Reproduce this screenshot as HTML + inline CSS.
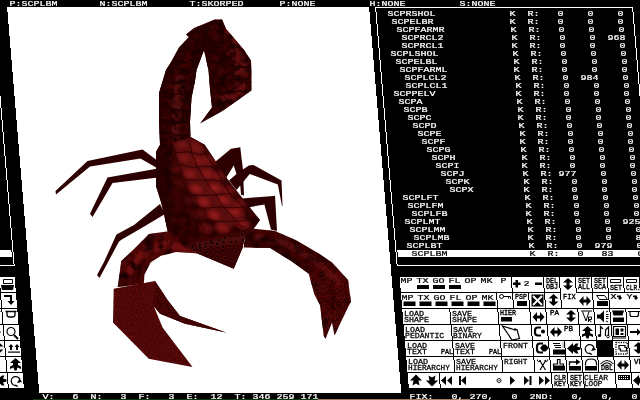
<!DOCTYPE html>
<html><head><meta charset="utf-8"><title>SKORPED</title>
<style>
html,body{margin:0;padding:0;background:#000;overflow:hidden}
#s{position:relative;width:640px;height:400px;overflow:hidden;background:#000}
svg{position:absolute;left:0;top:0}
.t{position:absolute;font:10px/10px "Liberation Mono",monospace;color:#fff;white-space:pre;transform:scale(1,.8);transform-origin:0 0;-webkit-text-stroke-width:.3px}
</style></head><body><div id="s">
<svg width="640" height="400" viewBox="0 0 640 400" shape-rendering="crispEdges">
<rect x="7" y="7" width="362" height="5" fill="#fff"/><rect x="8" y="12" width="362" height="12" fill="#fff"/><rect x="9" y="24" width="362" height="12" fill="#fff"/><rect x="10" y="36" width="362" height="12" fill="#fff"/><rect x="11" y="48" width="362" height="12" fill="#fff"/><rect x="12" y="60" width="362" height="12" fill="#fff"/><rect x="13" y="72" width="362" height="12" fill="#fff"/><rect x="14" y="84" width="362" height="12" fill="#fff"/><rect x="15" y="96" width="362" height="12" fill="#fff"/><rect x="16" y="108" width="362" height="12" fill="#fff"/><rect x="17" y="120" width="362" height="12" fill="#fff"/><rect x="18" y="132" width="362" height="12" fill="#fff"/><rect x="19" y="144" width="362" height="12" fill="#fff"/><rect x="20" y="156" width="362" height="12" fill="#fff"/><rect x="21" y="168" width="362" height="12" fill="#fff"/><rect x="22" y="180" width="362" height="12" fill="#fff"/><rect x="23" y="192" width="362" height="12" fill="#fff"/><rect x="24" y="204" width="362" height="12" fill="#fff"/><rect x="25" y="216" width="362" height="12" fill="#fff"/><rect x="26" y="228" width="362" height="12" fill="#fff"/><rect x="27" y="240" width="362" height="12" fill="#fff"/><rect x="28" y="252" width="362" height="12" fill="#fff"/><rect x="29" y="264" width="362" height="12" fill="#fff"/><rect x="30" y="276" width="362" height="12" fill="#fff"/><rect x="31" y="288" width="362" height="12" fill="#fff"/><rect x="32" y="300" width="362" height="12" fill="#fff"/><rect x="33" y="312" width="362" height="12" fill="#fff"/><rect x="34" y="324" width="362" height="12" fill="#fff"/><rect x="35" y="336" width="362" height="12" fill="#fff"/><rect x="36" y="348" width="362" height="12" fill="#fff"/><rect x="37" y="360" width="362" height="12" fill="#fff"/><rect x="38" y="372" width="362" height="12" fill="#fff"/><rect x="39" y="384" width="362" height="9" fill="#fff"/><rect x="375" y="7" width="1" height="5" fill="#fff"/><rect x="376" y="12" width="1" height="12" fill="#fff"/><rect x="377" y="24" width="1" height="12" fill="#fff"/><rect x="378" y="36" width="1" height="12" fill="#fff"/><rect x="379" y="48" width="1" height="12" fill="#fff"/><rect x="380" y="60" width="1" height="12" fill="#fff"/><rect x="381" y="72" width="1" height="12" fill="#fff"/><rect x="382" y="84" width="1" height="12" fill="#fff"/><rect x="383" y="96" width="1" height="12" fill="#fff"/><rect x="384" y="108" width="1" height="12" fill="#fff"/><rect x="385" y="120" width="1" height="12" fill="#fff"/><rect x="386" y="132" width="1" height="12" fill="#fff"/><rect x="387" y="144" width="1" height="12" fill="#fff"/><rect x="388" y="156" width="1" height="12" fill="#fff"/><rect x="389" y="168" width="1" height="12" fill="#fff"/><rect x="390" y="180" width="1" height="12" fill="#fff"/><rect x="391" y="192" width="1" height="12" fill="#fff"/><rect x="392" y="204" width="1" height="12" fill="#fff"/><rect x="393" y="216" width="1" height="12" fill="#fff"/><rect x="394" y="228" width="1" height="12" fill="#fff"/><rect x="395" y="240" width="1" height="12" fill="#fff"/><rect x="396" y="252" width="1" height="12" fill="#fff"/><rect x="397" y="264" width="1" height="2" fill="#fff"/><rect x="632" y="7" width="1" height="5" fill="#fff"/><rect x="633" y="12" width="1" height="12" fill="#fff"/><rect x="634" y="24" width="1" height="12" fill="#fff"/><rect x="635" y="36" width="1" height="12" fill="#fff"/><rect x="636" y="48" width="1" height="12" fill="#fff"/><rect x="637" y="60" width="1" height="12" fill="#fff"/><rect x="638" y="72" width="1" height="12" fill="#fff"/><rect x="639" y="84" width="1" height="12" fill="#fff"/><rect x="0" y="96" width="1" height="12" fill="#fff"/><rect x="1" y="108" width="1" height="12" fill="#fff"/><rect x="2" y="120" width="1" height="12" fill="#fff"/><rect x="3" y="132" width="1" height="12" fill="#fff"/><rect x="4" y="144" width="1" height="12" fill="#fff"/><rect x="5" y="156" width="1" height="12" fill="#fff"/><rect x="6" y="168" width="1" height="12" fill="#fff"/><rect x="7" y="180" width="1" height="12" fill="#fff"/><rect x="8" y="192" width="1" height="12" fill="#fff"/><rect x="9" y="204" width="1" height="12" fill="#fff"/><rect x="10" y="216" width="1" height="12" fill="#fff"/><rect x="11" y="228" width="1" height="12" fill="#fff"/><rect x="12" y="240" width="1" height="12" fill="#fff"/><rect x="13" y="252" width="1" height="12" fill="#fff"/><rect x="14" y="264" width="1" height="2" fill="#fff"/><rect x="375" y="7" width="258" height="1" fill="#fff"/><rect x="397" y="265" width="258" height="1" fill="#fff"/><rect x="-243" y="265" width="258" height="1" fill="#fff"/><rect x="397" y="250" width="254" height="2" fill="#fff"/><rect x="-243" y="250" width="254" height="2" fill="#fff"/><rect x="398" y="252" width="254" height="5" fill="#fff"/><rect x="-242" y="252" width="254" height="5" fill="#fff"/><rect x="400" y="277" width="111" height="11" fill="#fff"/><rect x="401" y="288" width="111" height="4" fill="#fff"/><rect x="512" y="277" width="31" height="11" fill="#fff"/><rect x="513" y="288" width="31" height="4" fill="#fff"/><rect x="544" y="277" width="15" height="11" fill="#fff"/><rect x="545" y="288" width="15" height="4" fill="#fff"/><rect x="560" y="277" width="15" height="11" fill="#fff"/><rect x="561" y="288" width="15" height="4" fill="#fff"/><rect x="561" y="292" width="15" height="1" fill="#fff"/><rect x="576" y="277" width="15" height="11" fill="#fff"/><rect x="577" y="288" width="15" height="4" fill="#fff"/><rect x="592" y="277" width="15" height="11" fill="#fff"/><rect x="593" y="288" width="15" height="4" fill="#fff"/><rect x="608" y="277" width="15" height="11" fill="#fff"/><rect x="609" y="288" width="15" height="4" fill="#fff"/><rect x="624" y="277" width="15" height="11" fill="#fff"/><rect x="625" y="288" width="15" height="4" fill="#fff"/><rect x="0" y="277" width="15" height="11" fill="#fff"/><rect x="1" y="288" width="15" height="4" fill="#fff"/><rect x="401" y="293" width="95" height="7" fill="#fff"/><rect x="402" y="300" width="95" height="8" fill="#fff"/><rect x="497" y="293" width="15" height="7" fill="#fff"/><rect x="498" y="300" width="15" height="8" fill="#fff"/><rect x="513" y="293" width="15" height="7" fill="#fff"/><rect x="514" y="300" width="15" height="8" fill="#fff"/><rect x="529" y="293" width="15" height="7" fill="#fff"/><rect x="530" y="300" width="15" height="8" fill="#fff"/><rect x="545" y="293" width="15" height="7" fill="#fff"/><rect x="546" y="300" width="15" height="8" fill="#fff"/><rect x="561" y="293" width="31" height="7" fill="#fff"/><rect x="562" y="300" width="31" height="8" fill="#fff"/><rect x="593" y="293" width="15" height="7" fill="#fff"/><rect x="594" y="300" width="15" height="8" fill="#fff"/><rect x="609" y="293" width="31" height="7" fill="#fff"/><rect x="610" y="300" width="31" height="8" fill="#fff"/><rect x="-30" y="300" width="31" height="8" fill="#fff"/><rect x="1" y="293" width="15" height="7" fill="#fff"/><rect x="2" y="300" width="15" height="8" fill="#fff"/><rect x="402" y="309" width="47" height="3" fill="#fff"/><rect x="403" y="312" width="47" height="12" fill="#fff"/><rect x="450" y="309" width="47" height="3" fill="#fff"/><rect x="451" y="312" width="47" height="12" fill="#fff"/><rect x="498" y="309" width="31" height="3" fill="#fff"/><rect x="499" y="312" width="31" height="12" fill="#fff"/><rect x="530" y="309" width="15" height="3" fill="#fff"/><rect x="531" y="312" width="15" height="12" fill="#fff"/><rect x="546" y="309" width="31" height="3" fill="#fff"/><rect x="547" y="312" width="31" height="12" fill="#fff"/><rect x="578" y="309" width="15" height="3" fill="#fff"/><rect x="579" y="312" width="15" height="12" fill="#fff"/><rect x="594" y="309" width="15" height="3" fill="#fff"/><rect x="595" y="312" width="15" height="12" fill="#fff"/><rect x="610" y="309" width="15" height="3" fill="#fff"/><rect x="611" y="312" width="15" height="12" fill="#fff"/><rect x="626" y="309" width="15" height="3" fill="#fff"/><rect x="-14" y="309" width="15" height="3" fill="#fff"/><rect x="627" y="312" width="15" height="12" fill="#fff"/><rect x="-13" y="312" width="15" height="12" fill="#fff"/><rect x="2" y="309" width="15" height="3" fill="#fff"/><rect x="3" y="312" width="15" height="12" fill="#fff"/><rect x="404" y="325" width="47" height="11" fill="#fff"/><rect x="405" y="336" width="47" height="4" fill="#fff"/><rect x="452" y="325" width="47" height="11" fill="#fff"/><rect x="453" y="336" width="47" height="4" fill="#fff"/><rect x="500" y="325" width="31" height="11" fill="#fff"/><rect x="501" y="336" width="31" height="4" fill="#fff"/><rect x="532" y="325" width="15" height="11" fill="#fff"/><rect x="533" y="336" width="15" height="4" fill="#fff"/><rect x="548" y="325" width="31" height="11" fill="#fff"/><rect x="549" y="336" width="31" height="4" fill="#fff"/><rect x="580" y="325" width="15" height="11" fill="#fff"/><rect x="581" y="336" width="15" height="4" fill="#fff"/><rect x="596" y="325" width="15" height="11" fill="#fff"/><rect x="597" y="336" width="15" height="4" fill="#fff"/><rect x="612" y="325" width="15" height="11" fill="#fff"/><rect x="613" y="336" width="15" height="4" fill="#fff"/><rect x="628" y="325" width="15" height="11" fill="#fff"/><rect x="-12" y="325" width="15" height="11" fill="#fff"/><rect x="629" y="336" width="15" height="4" fill="#fff"/><rect x="-11" y="336" width="15" height="4" fill="#fff"/><rect x="4" y="325" width="15" height="11" fill="#fff"/><rect x="5" y="336" width="15" height="4" fill="#fff"/><rect x="405" y="341" width="47" height="7" fill="#fff"/><rect x="406" y="348" width="47" height="8" fill="#fff"/><rect x="453" y="341" width="47" height="7" fill="#fff"/><rect x="454" y="348" width="47" height="8" fill="#fff"/><rect x="501" y="341" width="31" height="7" fill="#fff"/><rect x="502" y="348" width="31" height="8" fill="#fff"/><rect x="533" y="341" width="15" height="7" fill="#fff"/><rect x="534" y="348" width="15" height="8" fill="#fff"/><rect x="549" y="341" width="15" height="7" fill="#fff"/><rect x="550" y="348" width="15" height="8" fill="#fff"/><rect x="565" y="341" width="15" height="7" fill="#fff"/><rect x="566" y="348" width="15" height="8" fill="#fff"/><rect x="581" y="341" width="15" height="7" fill="#fff"/><rect x="582" y="348" width="15" height="8" fill="#fff"/><rect x="597" y="340" width="17" height="17" fill="#000"/><rect x="613" y="341" width="15" height="7" fill="#fff"/><rect x="614" y="348" width="15" height="8" fill="#fff"/><rect x="629" y="341" width="15" height="7" fill="#fff"/><rect x="-11" y="341" width="15" height="7" fill="#fff"/><rect x="630" y="348" width="15" height="8" fill="#fff"/><rect x="-10" y="348" width="15" height="8" fill="#fff"/><rect x="5" y="341" width="15" height="7" fill="#fff"/><rect x="6" y="348" width="15" height="8" fill="#fff"/><rect x="406" y="357" width="47" height="3" fill="#fff"/><rect x="407" y="360" width="47" height="12" fill="#fff"/><rect x="454" y="357" width="47" height="3" fill="#fff"/><rect x="455" y="360" width="47" height="12" fill="#fff"/><rect x="502" y="357" width="31" height="3" fill="#fff"/><rect x="503" y="360" width="31" height="12" fill="#fff"/><rect x="534" y="357" width="15" height="3" fill="#fff"/><rect x="535" y="360" width="15" height="12" fill="#fff"/><rect x="550" y="357" width="15" height="3" fill="#fff"/><rect x="551" y="360" width="15" height="12" fill="#fff"/><rect x="566" y="357" width="15" height="3" fill="#fff"/><rect x="567" y="360" width="15" height="12" fill="#fff"/><rect x="582" y="357" width="15" height="3" fill="#fff"/><rect x="583" y="360" width="15" height="12" fill="#fff"/><rect x="598" y="357" width="15" height="3" fill="#fff"/><rect x="599" y="360" width="15" height="12" fill="#fff"/><rect x="614" y="357" width="15" height="3" fill="#fff"/><rect x="615" y="360" width="15" height="12" fill="#fff"/><rect x="630" y="357" width="15" height="3" fill="#fff"/><rect x="-10" y="357" width="15" height="3" fill="#fff"/><rect x="631" y="360" width="15" height="12" fill="#fff"/><rect x="-9" y="360" width="15" height="12" fill="#fff"/><rect x="6" y="357" width="15" height="3" fill="#fff"/><rect x="7" y="360" width="15" height="12" fill="#fff"/><rect x="408" y="373" width="31" height="11" fill="#fff"/><rect x="409" y="384" width="31" height="4" fill="#fff"/><rect x="440" y="373" width="111" height="11" fill="#fff"/><rect x="441" y="384" width="111" height="4" fill="#fff"/><rect x="552" y="373" width="15" height="11" fill="#fff"/><rect x="553" y="384" width="15" height="4" fill="#fff"/><rect x="568" y="373" width="15" height="11" fill="#fff"/><rect x="569" y="384" width="15" height="4" fill="#fff"/><rect x="584" y="373" width="31" height="11" fill="#fff"/><rect x="585" y="384" width="31" height="4" fill="#fff"/><rect x="616" y="373" width="15" height="11" fill="#fff"/><rect x="617" y="384" width="15" height="4" fill="#fff"/><rect x="632" y="373" width="15" height="11" fill="#fff"/><rect x="-8" y="373" width="15" height="11" fill="#fff"/><rect x="633" y="384" width="15" height="4" fill="#fff"/><rect x="-7" y="384" width="15" height="4" fill="#fff"/><rect x="8" y="373" width="15" height="11" fill="#fff"/><rect x="9" y="384" width="15" height="4" fill="#fff"/>
</svg>
<svg width="640" height="400" viewBox="0 0 640 400">
<defs><filter id="bl" x="-20%" y="-20%" width="140%" height="140%"><feGaussianBlur stdDeviation="2.2"/></filter><filter id="bl1" x="-20%" y="-20%" width="140%" height="140%"><feGaussianBlur stdDeviation="1.2"/></filter><filter id="sp" color-interpolation-filters="sRGB" x="0" y="0" width="100%" height="100%"><feTurbulence type="fractalNoise" baseFrequency="0.85" numOctaves="1" seed="7" result="n"/><feColorMatrix in="n" type="matrix" values="0 0 0 0 0.50  0 0 0 0 0.06  0 0 0 0 0.06  3 0 0 0 -1.45"/><feComposite in2="SourceGraphic" operator="in"/></filter><filter id="mo" color-interpolation-filters="sRGB" x="0" y="0" width="100%" height="100%"><feTurbulence type="fractalNoise" baseFrequency="0.11" numOctaves="3" seed="11" result="n"/><feColorMatrix in="n" type="matrix" values="0 0 0 0 0.12  0 0 0 0 0  0 0 0 0 0  0 3.2 0 0 -1.35"/><feComposite in2="SourceGraphic" operator="in"/></filter><filter id="mo2" color-interpolation-filters="sRGB" x="0" y="0" width="100%" height="100%"><feTurbulence type="fractalNoise" baseFrequency="0.2" numOctaves="2" seed="4" result="n"/><feColorMatrix in="n" type="matrix" values="0 0 0 0 0.10  0 0 0 0 0  0 0 0 0 0  0 0 2.6 0 -1.1"/><feComposite in2="SourceGraphic" operator="in"/></filter><clipPath id="cb"><polygon points="156,186 161,202 164,214 167.5,231 188,249.5 233.75,268.75 242.5,248 245,236 253.75,228.75 260,220 240,195 227.5,179 217.5,164 205,145 190.5,137 160,145 156,152"/></clipPath><clipPath id="ct"><polygon points="156,186 156,152 160,145 159,119 159,93 166,70 172,60.5 179,47.5 189,37 186,34.5 194,28 215,19.5 222,19.5 226,29 233,37 244,50 251,60.5 251.5,72 251.5,90.5 222.5,111 200,123.5 212,107.5 210,89 208.5,70 207.5,66 204,50 196.5,70 195,81 191.5,98 190,122 190.5,137 205,145 180,160"/></clipPath><clipPath id="ca"><polygon points="170,231 149,234 134,249 121.25,261 118.25,283.5 117.5,287 143.75,284 144.5,274.5 150.5,262.5 161,255.75 176,252 200,253.5 190,249"/><polygon points="253.75,228.75 275,231 295.6,240 318,253 332,262.5 348,280 351,302 350,303 334.5,335.5 332,322.5 325.5,338.75 323.75,336 320,305 314.4,294.4 308.75,273.75 292,261.5 270,248 243.75,247.5 245,236"/></clipPath><radialGradient id="sc"><stop offset="0" stop-color="#951c1c"/><stop offset=".55" stop-color="#7a1313" stop-opacity=".85"/><stop offset="1" stop-color="#560909" stop-opacity="0"/></radialGradient></defs><polygon points="55.5,191 87.5,161 142.5,149.5 158,161 157,168 140.5,158.5 90,166.5 56,194.5" fill="#2c0000" /><polygon points="90,213.75 107.5,177.5 158,168.5 158,177.5 112.5,183 92.5,217" fill="#2c0000" /><polygon points="160,204 165,214 145,226 121,240 119,241.5 99.5,278 97,275 104,262 116.5,234.5 134,225" fill="#2c0000" /><polygon points="215,162 231,148.75 240.3,147.25 241,154 233.75,165.6 226,178" fill="#2c0000" /><polygon points="233.75,165.6 238,150 241,154 243,169.4 244,195.6 241,194.7 240.3,186 236.5,174" fill="#2c0000" /><polygon points="229,180.5 236.5,174 248.75,165.6 253.4,165 281.5,180.6 282.5,206 282,206 277.8,184.4 249.7,174 236.5,190" fill="#2c0000" /><polygon points="242,198.4 273.75,196 275,195.6 277,231 271,229.5 264.4,204.4 248,207.5" fill="#2c0000" /><polygon points="156,186 156,152 160,145 159,119 159,93 166,70 172,60.5 179,47.5 189,37 186,34.5 194,28 215,19.5 222,19.5 226,29 233,37 244,50 251,60.5 251.5,72 251.5,90.5 222.5,111 200,123.5 212,107.5 210,89 208.5,70 207.5,66 204,50 196.5,70 195,81 191.5,98 190,122 190.5,137 205,145 180,160" fill="#3b0303" /><polygon points="156,186 161,202 164,214 167.5,231 188,249.5 233.75,268.75 242.5,248 245,236 253.75,228.75 260,220 240,195 227.5,179 217.5,164 205,145 190.5,137 160,145 156,152" fill="#360202" /><polygon points="170,231 149,234 134,249 121.25,261 118.25,283.5 117.5,287 143.75,284 144.5,274.5 150.5,262.5 161,255.75 176,252 200,253.5 190,249" fill="#4a0606" /><polygon points="253.75,228.75 275,231 295.6,240 318,253 332,262.5 348,280 351,302 350,303 334.5,335.5 332,322.5 325.5,338.75 323.75,336 320,305 314.4,294.4 308.75,273.75 292,261.5 270,248 243.75,247.5 245,236" fill="#3c0303" /><polygon points="113.75,288.75 155,281 161,290 167.5,300 180,316 226,332.5 185,323.75 160,313.75 153.75,306 162.5,327.5 192.5,367 148.75,358.75 113,322.5" fill="#480606" /><g clip-path="url(#ct)"><path d="M174,146L175,110L182,76" stroke="#520909" stroke-width="12" fill="none" filter="url(#bl)"/><path d="M186,66L203,42" stroke="#480606" stroke-width="8" fill="none" filter="url(#bl)"/><path d="M232,50L241,64L240,88L224,104" stroke="#5e0d0d" stroke-width="13" fill="none" filter="url(#bl)"/><path d="M244,58L247,72L246,88" stroke="#701313" stroke-width="5" fill="none" filter="url(#bl)"/><path d="M222,20L228,32L246,52" stroke="#6a1111" stroke-width="5" fill="none" filter="url(#bl1)"/><polygon points="156,186 156,152 160,145 159,119 159,93 166,70 172,60.5 179,47.5 189,37 186,34.5 194,28 215,19.5 222,19.5 226,29 233,37 244,50 251,60.5 251.5,72 251.5,90.5 222.5,111 200,123.5 212,107.5 210,89 208.5,70 207.5,66 204,50 196.5,70 195,81 191.5,98 190,122 190.5,137 205,145 180,160" fill="#fff" filter="url(#mo)"/><polygon points="156,186 156,152 160,145 159,119 159,93 166,70 172,60.5 179,47.5 189,37 186,34.5 194,28 215,19.5 222,19.5 226,29 233,37 244,50 251,60.5 251.5,72 251.5,90.5 222.5,111 200,123.5 212,107.5 210,89 208.5,70 207.5,66 204,50 196.5,70 195,81 191.5,98 190,122 190.5,137 205,145 180,160" fill="#fff" filter="url(#mo2)"/><path d="M158,150L160,95L170,62L190,36L216,20" stroke="#260000" stroke-width="5" fill="none" filter="url(#bl1)"/><path d="M190,135L191,98L196,70L204,50L200,40" stroke="#260000" stroke-width="4" fill="none" filter="url(#bl1)"/><path d="M196,26L222,48L212,52z" fill="#240000" filter="url(#bl1)"/><path d="M208,52L212,108L206,118" stroke="#2a0000" stroke-width="4" fill="none" filter="url(#bl1)"/><path d="M158.6,133.1L165.0,133.9L171.6,132.8L176.8,135.9L183.4,134.5L190.8,135.9" stroke="#1c0000" stroke-width="1.2" fill="none"/><path d="M160.5,119.9L166.2,119.7L172.2,122.8L178.0,123.2L184.3,121.8L190.4,124.3" stroke="#1c0000" stroke-width="1.2" fill="none"/><path d="M158.7,104.5L166.0,106.7L172.2,108.8L178.5,109.7L184.4,110.2L190.9,111.4" stroke="#1c0000" stroke-width="1.2" fill="none"/><path d="M160.6,91.7L165.8,92.7L173.5,94.0L179.4,94.2L185.6,95.0L191.8,96.3" stroke="#1c0000" stroke-width="1.2" fill="none"/><path d="M164.1,81.3L170.5,82.0L177.0,82.8L182.9,80.7L189.4,83.9L195.6,83.2" stroke="#1c0000" stroke-width="1.2" fill="none"/><path d="M168.3,67.1L174.3,69.0L179.3,68.2L186.0,72.0L190.5,72.2L196.9,70.9" stroke="#1c0000" stroke-width="1.2" fill="none"/><path d="M173.7,57.9L179.8,56.5L184.6,57.5L189.9,59.5L195.4,62.5L200.0,63.6" stroke="#1c0000" stroke-width="1.2" fill="none"/><path d="M180.7,45.6L185.6,46.9L189.3,49.5L194.4,50.1L197.9,53.8L202.7,55.5" stroke="#1c0000" stroke-width="1.2" fill="none"/><path d="M190.6,37.6L193.1,39.7L196.6,41.5L199.7,43.2L203.5,44.4L205.9,46.7" stroke="#1c0000" stroke-width="1.2" fill="none"/><path d="M209.6,61.4L219.0,63.3L226.5,62.8L234.5,65.9L242.0,67.2L251.2,66.6" stroke="#1c0000" stroke-width="1.2" fill="none"/><path d="M211.2,77.9L219.5,78.3L227.7,80.4L234.8,79.0L244.1,82.7L251.6,81.9" stroke="#1c0000" stroke-width="1.2" fill="none"/><path d="M212.1,93.4L218.6,93.0L225.4,93.5L232.1,92.4L239.6,90.9L246.1,92.8" stroke="#1c0000" stroke-width="1.2" fill="none"/><path d="M224.7,39.1L229.5,41.6L232.5,44.6L237.3,45.9L240.7,49.1L245.5,51.8" stroke="#1c0000" stroke-width="1.2" fill="none"/><path d="M214.6,28.9L217.3,32.1L221.8,33.0L224.4,33.6L228.4,35.4L232.5,39.1" stroke="#1c0000" stroke-width="1.2" fill="none"/><path d="M213.5,105.3L218.1,105.3L221.7,103.1L224.2,101.7L228.9,100.5L231.8,99.7" stroke="#1c0000" stroke-width="1.2" fill="none"/></g><g clip-path="url(#cb)"><polygon points="156,186 161,202 164,214 167.5,231 188,249.5 233.75,268.75 242.5,248 245,236 253.75,228.75 260,220 240,195 227.5,179 217.5,164 205,145 190.5,137 160,145 156,152" fill="#fff" filter="url(#mo)"/><path d="M156,150L158,190L168,232" stroke="#280000" stroke-width="12" fill="none" filter="url(#bl)"/><path d="M184,140L198,172L216,200L236,224" stroke="#5a0b0b" stroke-width="28" fill="none" filter="url(#bl)"/><ellipse cx="181" cy="144" rx="10.5" ry="7.5" fill="url(#sc)" opacity="0.5" transform="rotate(20 181 144)"/><ellipse cx="196" cy="147.5" rx="10.5" ry="7.5" fill="url(#sc)" opacity="0.55" transform="rotate(20 196 147.5)"/><ellipse cx="184" cy="158" rx="10.5" ry="7.5" fill="url(#sc)" opacity="0.6" transform="rotate(20 184 158)"/><ellipse cx="199" cy="161" rx="10.5" ry="7.5" fill="url(#sc)" opacity="0.65" transform="rotate(20 199 161)"/><ellipse cx="190" cy="174" rx="10.5" ry="7.5" fill="url(#sc)" opacity="0.8" transform="rotate(20 190 174)"/><ellipse cx="207.5" cy="174" rx="10.5" ry="7.5" fill="url(#sc)" opacity="0.85" transform="rotate(20 207.5 174)"/><ellipse cx="196" cy="189" rx="10.5" ry="7.5" fill="url(#sc)" opacity="1" transform="rotate(20 196 189)"/><ellipse cx="215" cy="188" rx="10.5" ry="7.5" fill="url(#sc)" opacity="1" transform="rotate(20 215 188)"/><ellipse cx="204" cy="202" rx="10.5" ry="7.5" fill="url(#sc)" opacity="1" transform="rotate(20 204 202)"/><ellipse cx="224" cy="200" rx="10.5" ry="7.5" fill="url(#sc)" opacity="1" transform="rotate(20 224 200)"/><ellipse cx="214" cy="215" rx="10.5" ry="7.5" fill="url(#sc)" opacity="1" transform="rotate(20 214 215)"/><ellipse cx="235" cy="212" rx="10.5" ry="7.5" fill="url(#sc)" opacity="1" transform="rotate(20 235 212)"/><ellipse cx="209" cy="160" rx="10.5" ry="7.5" fill="url(#sc)" opacity="0.6" transform="rotate(20 209 160)"/><ellipse cx="219" cy="176" rx="10.5" ry="7.5" fill="url(#sc)" opacity="0.6" transform="rotate(20 219 176)"/><ellipse cx="229" cy="191" rx="10.5" ry="7.5" fill="url(#sc)" opacity="0.6" transform="rotate(20 229 191)"/><ellipse cx="240" cy="204" rx="10.5" ry="7.5" fill="url(#sc)" opacity="0.6" transform="rotate(20 240 204)"/><ellipse cx="222" cy="228" rx="10.5" ry="7.5" fill="url(#sc)" opacity="0.8" transform="rotate(20 222 228)"/><ellipse cx="243" cy="224" rx="10.5" ry="7.5" fill="url(#sc)" opacity="0.8" transform="rotate(20 243 224)"/><ellipse cx="176" cy="168" rx="10.5" ry="7.5" fill="url(#sc)" opacity="0.3" transform="rotate(20 176 168)"/><ellipse cx="182" cy="184" rx="10.5" ry="7.5" fill="url(#sc)" opacity="0.3" transform="rotate(20 182 184)"/><ellipse cx="190" cy="200" rx="10.5" ry="7.5" fill="url(#sc)" opacity="0.3" transform="rotate(20 190 200)"/><ellipse cx="199" cy="214" rx="10.5" ry="7.5" fill="url(#sc)" opacity="0.35" transform="rotate(20 199 214)"/><ellipse cx="206" cy="228" rx="10.5" ry="7.5" fill="url(#sc)" opacity="0.5" transform="rotate(20 206 228)"/><path d="M187.9,140.7L190.8,146.3L191.8,154.7L195.3,161.1L196.9,167.3" stroke="#330303" stroke-width="1.0" fill="none"/><path d="M197.6,165.2L200.8,172.9L204.2,178.1L207.2,183.6L210.6,188.8" stroke="#330303" stroke-width="1.0" fill="none"/><path d="M211.1,189.4L215.2,193.7L219.1,200.5L222.8,206.1L226.6,210.2" stroke="#330303" stroke-width="1.0" fill="none"/><path d="M225.3,210.7L230.0,213.9L235.2,219.1L239.4,224.7L244.2,227.6" stroke="#330303" stroke-width="1.0" fill="none"/><path d="M171.7,152.0L180.2,152.5L188.3,151.7L196.8,154.1L204.5,154.8" stroke="#330303" stroke-width="1.0" fill="none"/><path d="M170.6,166.9L181.7,164.9L192.7,167.5L203.1,166.1L214.7,167.1" stroke="#330303" stroke-width="1.0" fill="none"/><path d="M175.9,180.9L188.9,179.6L200.4,180.0L213.0,179.8L226.7,182.0" stroke="#330303" stroke-width="1.0" fill="none"/><path d="M181.4,196.0L195.2,195.0L208.8,195.4L222.6,194.1L235.6,193.5" stroke="#330303" stroke-width="1.0" fill="none"/><path d="M189.5,209.2L204.8,208.2L218.4,207.1L233.3,207.8L248.4,206.7" stroke="#330303" stroke-width="1.0" fill="none"/><path d="M200.4,222.3L213.7,221.1L227.5,221.6L241.1,221.0L254.9,219.3" stroke="#330303" stroke-width="1.0" fill="none"/><path d="M174.1,146.5L175.4,153.3L177.9,162.1L180.6,168.1L182.6,176.8" stroke="#330303" stroke-width="1.0" fill="none"/><path d="M181.7,175.9L184.5,184.4L188.2,192.1L191.4,199.0L194.3,206.2" stroke="#330303" stroke-width="1.0" fill="none"/><path d="M193.4,206.2L195.8,211.5L199.4,217.7L200.9,224.4L204.5,231.1" stroke="#330303" stroke-width="1.0" fill="none"/><path d="M203.3,151.0L206.0,155.5L209.2,159.9L212.1,163.7L214.4,166.7" stroke="#330303" stroke-width="1.0" fill="none"/><path d="M214.4,168.0L218.8,173.9L223.3,183.2L226.9,188.5L232.1,196.9" stroke="#330303" stroke-width="1.0" fill="none"/><path d="M231.6,195.1L236.1,200.8L241.4,204.7L245.3,209.2L249.8,213.8" stroke="#330303" stroke-width="1.0" fill="none"/><polygon points="188,242 254,228 260,232 235,270 184,250" fill="#380303" /><path d="M196,246L246,238" stroke="#4a0707" stroke-width="8" fill="none" filter="url(#bl)"/><circle cx="193.2" cy="245.5" r="2" fill="#5a1010" opacity=".6"/><circle cx="193.2" cy="245.5" r="1.15" fill="#0a0000"/><circle cx="199.8" cy="244.6" r="2" fill="#5a1010" opacity=".6"/><circle cx="199.8" cy="244.6" r="1.15" fill="#0a0000"/><circle cx="205.9" cy="243.2" r="2" fill="#5a1010" opacity=".6"/><circle cx="205.9" cy="243.2" r="1.15" fill="#0a0000"/><circle cx="210.7" cy="240.9" r="2" fill="#5a1010" opacity=".6"/><circle cx="210.7" cy="240.9" r="1.15" fill="#0a0000"/><circle cx="218.8" cy="240.0" r="2" fill="#5a1010" opacity=".6"/><circle cx="218.8" cy="240.0" r="1.15" fill="#0a0000"/><circle cx="224.9" cy="237.6" r="2" fill="#5a1010" opacity=".6"/><circle cx="224.9" cy="237.6" r="1.15" fill="#0a0000"/><circle cx="230.3" cy="236.5" r="2" fill="#5a1010" opacity=".6"/><circle cx="230.3" cy="236.5" r="1.15" fill="#0a0000"/><circle cx="236.6" cy="235.8" r="2" fill="#5a1010" opacity=".6"/><circle cx="236.6" cy="235.8" r="1.15" fill="#0a0000"/><circle cx="241.8" cy="233.8" r="2" fill="#5a1010" opacity=".6"/><circle cx="241.8" cy="233.8" r="1.15" fill="#0a0000"/><circle cx="192.7" cy="247.3" r="2" fill="#5a1010" opacity=".6"/><circle cx="192.7" cy="247.3" r="1.15" fill="#0a0000"/><circle cx="199.9" cy="245.0" r="2" fill="#5a1010" opacity=".6"/><circle cx="199.9" cy="245.0" r="1.15" fill="#0a0000"/><circle cx="206.1" cy="244.1" r="2" fill="#5a1010" opacity=".6"/><circle cx="206.1" cy="244.1" r="1.15" fill="#0a0000"/><circle cx="212.0" cy="243.2" r="2" fill="#5a1010" opacity=".6"/><circle cx="212.0" cy="243.2" r="1.15" fill="#0a0000"/><circle cx="217.0" cy="243.9" r="2" fill="#5a1010" opacity=".6"/><circle cx="217.0" cy="243.9" r="1.15" fill="#0a0000"/><circle cx="223.6" cy="241.8" r="2" fill="#5a1010" opacity=".6"/><circle cx="223.6" cy="241.8" r="1.15" fill="#0a0000"/><circle cx="231.4" cy="242.2" r="2" fill="#5a1010" opacity=".6"/><circle cx="231.4" cy="242.2" r="1.15" fill="#0a0000"/><circle cx="236.2" cy="241.6" r="2" fill="#5a1010" opacity=".6"/><circle cx="236.2" cy="241.6" r="1.15" fill="#0a0000"/><circle cx="243.0" cy="240.2" r="2" fill="#5a1010" opacity=".6"/><circle cx="243.0" cy="240.2" r="1.15" fill="#0a0000"/><circle cx="186.4" cy="249.7" r="2" fill="#5a1010" opacity=".6"/><circle cx="186.4" cy="249.7" r="1.15" fill="#0a0000"/><circle cx="193.6" cy="249.4" r="2" fill="#5a1010" opacity=".6"/><circle cx="193.6" cy="249.4" r="1.15" fill="#0a0000"/><circle cx="200.2" cy="247.8" r="2" fill="#5a1010" opacity=".6"/><circle cx="200.2" cy="247.8" r="1.15" fill="#0a0000"/><circle cx="205.4" cy="247.2" r="2" fill="#5a1010" opacity=".6"/><circle cx="205.4" cy="247.2" r="1.15" fill="#0a0000"/><circle cx="211.2" cy="246.6" r="2" fill="#5a1010" opacity=".6"/><circle cx="211.2" cy="246.6" r="1.15" fill="#0a0000"/><circle cx="217.7" cy="247.4" r="2" fill="#5a1010" opacity=".6"/><circle cx="217.7" cy="247.4" r="1.15" fill="#0a0000"/><circle cx="223.3" cy="247.2" r="2" fill="#5a1010" opacity=".6"/><circle cx="223.3" cy="247.2" r="1.15" fill="#0a0000"/><circle cx="230.2" cy="246.1" r="2" fill="#5a1010" opacity=".6"/><circle cx="230.2" cy="246.1" r="1.15" fill="#0a0000"/><circle cx="237.4" cy="246.1" r="2" fill="#5a1010" opacity=".6"/><circle cx="237.4" cy="246.1" r="1.15" fill="#0a0000"/><circle cx="186.7" cy="250.8" r="2" fill="#5a1010" opacity=".6"/><circle cx="186.7" cy="250.8" r="1.15" fill="#0a0000"/><circle cx="193.7" cy="250.1" r="2" fill="#5a1010" opacity=".6"/><circle cx="193.7" cy="250.1" r="1.15" fill="#0a0000"/><circle cx="200.5" cy="250.2" r="2" fill="#5a1010" opacity=".6"/><circle cx="200.5" cy="250.2" r="1.15" fill="#0a0000"/><circle cx="206.3" cy="252.0" r="2" fill="#5a1010" opacity=".6"/><circle cx="206.3" cy="252.0" r="1.15" fill="#0a0000"/><circle cx="211.0" cy="252.1" r="2" fill="#5a1010" opacity=".6"/><circle cx="211.0" cy="252.1" r="1.15" fill="#0a0000"/><circle cx="218.0" cy="251.8" r="2" fill="#5a1010" opacity=".6"/><circle cx="218.0" cy="251.8" r="1.15" fill="#0a0000"/><circle cx="223.5" cy="250.9" r="2" fill="#5a1010" opacity=".6"/><circle cx="223.5" cy="250.9" r="1.15" fill="#0a0000"/><circle cx="230.0" cy="252.9" r="2" fill="#5a1010" opacity=".6"/><circle cx="230.0" cy="252.9" r="1.15" fill="#0a0000"/><circle cx="236.3" cy="252.6" r="2" fill="#5a1010" opacity=".6"/><circle cx="236.3" cy="252.6" r="1.15" fill="#0a0000"/><circle cx="181.9" cy="253.6" r="2" fill="#5a1010" opacity=".6"/><circle cx="181.9" cy="253.6" r="1.15" fill="#0a0000"/><circle cx="186.9" cy="253.0" r="2" fill="#5a1010" opacity=".6"/><circle cx="186.9" cy="253.0" r="1.15" fill="#0a0000"/><circle cx="193.5" cy="254.5" r="2" fill="#5a1010" opacity=".6"/><circle cx="193.5" cy="254.5" r="1.15" fill="#0a0000"/><circle cx="198.9" cy="255.2" r="2" fill="#5a1010" opacity=".6"/><circle cx="198.9" cy="255.2" r="1.15" fill="#0a0000"/><circle cx="206.5" cy="256.0" r="2" fill="#5a1010" opacity=".6"/><circle cx="206.5" cy="256.0" r="1.15" fill="#0a0000"/><circle cx="211.2" cy="256.9" r="2" fill="#5a1010" opacity=".6"/><circle cx="211.2" cy="256.9" r="1.15" fill="#0a0000"/><circle cx="217.5" cy="256.3" r="2" fill="#5a1010" opacity=".6"/><circle cx="217.5" cy="256.3" r="1.15" fill="#0a0000"/><circle cx="224.8" cy="258.1" r="2" fill="#5a1010" opacity=".6"/><circle cx="224.8" cy="258.1" r="1.15" fill="#0a0000"/><circle cx="230.5" cy="258.8" r="2" fill="#5a1010" opacity=".6"/><circle cx="230.5" cy="258.8" r="1.15" fill="#0a0000"/></g><g clip-path="url(#ca)"><path d="M196,250L165,244L140,255L128,275" stroke="#701111" stroke-width="8" fill="none" filter="url(#bl)"/><path d="M255,236L292,246L322,266L340,285" stroke="#560909" stroke-width="7" fill="none" filter="url(#bl)"/><path d="M250,244L290,259L309,274" stroke="#2c0000" stroke-width="3" fill="none" filter="url(#bl1)"/></g><polygon points="170,231 149,234 134,249 121.25,261 118.25,283.5 117.5,287 143.75,284 144.5,274.5 150.5,262.5 161,255.75 176,252 200,253.5 190,249" fill="#fff" filter="url(#mo)"/><polygon points="253.75,228.75 275,231 295.6,240 318,253 332,262.5 348,280 351,302 350,303 334.5,335.5 332,322.5 325.5,338.75 323.75,336 320,305 314.4,294.4 308.75,273.75 292,261.5 270,248 243.75,247.5 245,236" fill="#fff" filter="url(#mo)"/><polygon points="155,281 161,290 167.5,300 180,316 226,332.5 185,323.75 160,313.75 153.75,306" fill="#360202" /><polygon points="113.75,288.75 155,281 161,290 167.5,300 180,316 226,332.5 185,323.75 160,313.75 153.75,306 162.5,327.5 192.5,367 148.75,358.75 113,322.5" fill="#fff" filter="url(#sp)"/><polygon points="332,262.5 348,280 351,302 350,303 334.5,335.5 332,322.5 325.5,338.75 323.75,336 320,305 314.4,294.4 308.75,273.75" fill="#fff" filter="url(#sp)"/>
<g><g transform="translate(416,277)"><rect x="1" y="8" width="12" height="4" fill="#000"/></g><g transform="translate(432,277)"><rect x="1" y="8" width="12" height="4" fill="#000"/></g><g transform="translate(448,277)"><rect x="1" y="8" width="12" height="4" fill="#000"/></g><g transform="translate(512,277)"><path d="M1,5.5h2.5v-2.5h2.5v2.5h2.5v2.5h-2.5v2.5h-2.5v-2.5h-2.5z" fill="#000"/><rect x="23" y="5.5" width="7" height="2.5" fill="#000"/></g><g transform="translate(560,277)"><path d="M8,1 l5,4.5 h-3.5 v3 h3.5 L8,13 l-5,-4.5 h3.5 v-3 h-3.5z" fill="#000"/></g><g transform="translate(608,277)"><path d="M2.5,2.5h10v3h-10z" fill="none" stroke="#000" stroke-width="1"/></g><g transform="translate(624,277)"><path d="M2.5,2.5h10v3h-10z" fill="none" stroke="#000" stroke-width="1"/></g><g transform="translate(0,277)"><path d="M3.5,2.5h9v4h-9z" fill="none" stroke="#000" stroke-width="1"/><path d="M1,8h13l-1,5h-11z" fill="#000"/></g><g transform="translate(402,293)"><rect x="1.5" y="8.5" width="12" height="4.5" fill="#000"/></g><g transform="translate(418,293)"><rect x="1.5" y="8.5" width="12" height="4.5" fill="#000"/></g><g transform="translate(434,293)"><rect x="1.5" y="8.5" width="12" height="4.5" fill="#000"/></g><g transform="translate(450,293)"><rect x="1.5" y="8.5" width="12" height="4.5" fill="#000"/></g><g transform="translate(466,293)"><rect x="1.5" y="8.5" width="12" height="4.5" fill="#000"/></g><g transform="translate(482,293)"><rect x="1.5" y="8.5" width="12" height="4.5" fill="#000"/></g><g transform="translate(498,293)"><path d="M1.5,3.5a2,2 0 1,0 4,0a2,2 0 1,0 -4,0M5.5,3.5h7v2.5M10.5,3.5v2" fill="none" stroke="#000" stroke-width="1"/></g><g transform="translate(514,293)"><rect x="3" y="8" width="10" height="5" fill="#000"/></g><g transform="translate(530,293)"><rect x="1.5" y="1.5" width="12" height="12" fill="#000"/><path d="M3,3l9,9M12,3l-9,9" fill="none" stroke="#fff" stroke-width="1.8"/></g><g transform="translate(546,293)"><path d="M7.5,1 l5,4.5 h-3.5 v3 h3.5 L7.5,13 l-5,-4.5 h3.5 v-3 h-3.5z" fill="#000"/></g><g transform="translate(578,293)"><path d="M1,8 l4.5,-5 v3.5 h3 v-3.5 L13,8 l-4.5,5 v-3.5 h-3 v3.5z" fill="#000"/></g><g transform="translate(594,293)"><path d="M2.5,2.5h8l3,4h-8z" fill="none" stroke="#000" stroke-width="1"/><rect x="3" y="8" width="11" height="5" fill="#000"/></g><g transform="translate(610,293)"><path d="M7,2.5h4v2h1.5l-2.5,2.5l-2.5,-2.5h1.5v-0.5h-2z" fill="#000"/></g><g transform="translate(626,293)"><path d="M7,2.5h4v2h1.5l-2.5,2.5l-2.5,-2.5h1.5v-0.5h-2z" fill="#000"/></g><g transform="translate(-14,293)"><path d="M7,2.5h4v2h1.5l-2.5,2.5l-2.5,-2.5h1.5v-0.5h-2z" fill="#000"/></g><g transform="translate(2,293)"><path d="M2,2h8v6h2.5l-3.5,4l-3.5,-4h2.5v-4h-6z" fill="#000"/></g><g transform="translate(499,309)"><rect x="2" y="8" width="11" height="4.5" fill="#000"/></g><g transform="translate(531,309)"><path d="M1.5,8 l4.5,-5 v3.5 h3 v-3.5 L13.5,8 l-4.5,5 v-3.5 h-3 v3.5z" fill="#000"/></g><g transform="translate(563,309)"><path d="M8,1 l5,4.5 h-3.5 v3 h3.5 L8,13 l-5,-4.5 h3.5 v-3 h-3.5z" fill="#000"/></g><g transform="translate(579,309)"><path d="M2,2h11M3.5,2.5l3.5,9.5l3,-9.5" fill="none" stroke="#000" stroke-width="1"/><path d="M9.5,13v-5h3v2.5h-3l3,2.5" fill="none" stroke="#000" stroke-width="1"/></g><g transform="translate(595,309)"><path d="M2,5.5h3l4,-4v12l-4,-4h-3z" fill="#000"/><path d="M11,3l2,-1M11,5.5h2.5M11,7.5h2.5M11,9.5h2.5M11,12l2,1" fill="none" stroke="#000" stroke-width="1"/></g><g transform="translate(611,309)"><path d="M1,1.5h12l-1.5,5h-9z" fill="#000"/><rect x="2" y="8.5" width="11" height="4.5" fill="#000"/></g><g transform="translate(627,309)"><path d="M1,2.5h12.5M3,3v2.5q0,2 2,2h4.5q2,0 2,-2v-2.5" fill="none" stroke="#000" stroke-width="1.2"/></g><g transform="translate(-13,309)"><path d="M1,2.5h12.5M3,3v2.5q0,2 2,2h4.5q2,0 2,-2v-2.5" fill="none" stroke="#000" stroke-width="1.2"/></g><g transform="translate(3,309)"><path d="M2.5,2.5h11M4,3v2.5q0,2.5 2.5,2.5h3q2.5,0 2.5,-2.5v-2.5" fill="none" stroke="#000" stroke-width="1.3"/></g><g transform="translate(500,325)"><path d="M2.5,1l11,3.5h3.5l2.5,9l-7.5,1.5z" fill="none" stroke="#000" stroke-width="1.2"/><path d="M14,4.5a1,1 0 1,0 2,0a1,1 0 1,0 -2,0" fill="none" stroke="#000" stroke-width="0.8"/></g><g transform="translate(532,325)"><path d="M9,2.5h-3q-3,0 -3,3v2q0,3 3,3h3" fill="none" stroke="#000" stroke-width="2.2"/><circle cx="11" cy="6.5" r="2" fill="#000"/></g><g transform="translate(548,325)"><path d="M2,7 l4.5,-5 v3.5 h3 v-3.5 L14,7 l-4.5,5 v-3.5 h-3 v3.5z" fill="#000"/></g><g transform="translate(580,325)"><path d="M7.5,1l5.5,5h-3l0,2l3,1.5v2.5l-3.5,-1.5l-1,3h-2l-1,-3l-3.5,1.5v-2.5l3,-1.5v-2h-3z" fill="#000"/></g><g transform="translate(596,325)"><path d="M4.5,10.5v-9l2.5,2.5M9.5,11v-6l3,-3v9" fill="none" stroke="#000" stroke-width="1.2"/><circle cx="3.5" cy="10.5" r="1.6" fill="#000"/><circle cx="12" cy="11.5" r="1.3" fill="none" stroke="#000"/></g><g transform="translate(612,325)"><path d="M1.5,1.5h12v10h-12z" fill="none" stroke="#000" stroke-width="1.2"/><rect x="3.5" y="3.5" width="3.5" height="6.5" fill="#000"/><rect x="8.5" y="3.5" width="3" height="3" fill="#000"/><rect x="8.5" y="8" width="3" height="2" fill="#000"/><rect x="1" y="12.5" width="13" height="1" fill="#000"/></g><g transform="translate(628,325)"><path d="M2,6h7v-2.5l4,3.5l-4,3.5v-2.5h-7z" fill="#000"/></g><g transform="translate(-12,325)"><path d="M2,6h7v-2.5l4,3.5l-4,3.5v-2.5h-7z" fill="#000"/></g><g transform="translate(4,325)"><path d="M3,6.5a4,4 0 1,0 8,0a4,4 0 1,0 -8,0" fill="none" stroke="#000" stroke-width="1.2"/><path d="M10,10l4,4" fill="none" stroke="#000" stroke-width="2"/></g><g transform="translate(534,341)"><path d="M9,2.5h-3q-3,0 -3,3v3q0,3 3,3h3" fill="none" stroke="#000" stroke-width="2.2"/><path d="M6,7l3,-3.5h2.5l3.5,3.5l-3.5,3.5h-2.5z" fill="#000"/></g><g transform="translate(550,341)"><path d="M3,2.5h7M4,4.5h7M5,6.5h6" fill="none" stroke="#000" stroke-width="1"/><path d="M12.5,2h1M12.5,4h1M12.5,6h1M14.5,2h.8M14.5,4h.8M14.5,6h.8" fill="none" stroke="#000" stroke-width="0.8"/><rect x="3" y="8.5" width="12" height="5" fill="#000"/></g><g transform="translate(566,341)"><path d="M1,7.5l6,-5.5v3l3,-2.5l2.5,0l-1.5,3l3.5,1v2l-3.5,1l1.5,3h-2.5l-3,-2.5v3z" fill="#000"/></g><g transform="translate(582,341)"><path d="M8.5,12.5a4.5,4.5 0 1,1 3.5,-6" fill="none" stroke="#000" stroke-width="1.3"/><path d="M9,10l5,-1l-2.5,-3.5z" fill="#000"/><path d="M7,12l3,1.5" fill="none" stroke="#000" stroke-width="1.2"/></g><g transform="translate(614,341)"><path d="M2,1.5h11.5v11.5h-11.5z" fill="none" stroke="#000" stroke-width="1.3" stroke-dasharray="1.2,1.2"/><path d="M5,4.5h6v2h1.5v3.5h-6v-2h-1.5z" fill="none" stroke="#000" stroke-width="1.2"/></g><g transform="translate(630,341)"><path d="M8.5,1 l5,4.5 h-3.5 v3 h3.5 L8.5,13 l-5,-4.5 h3.5 v-3 h-3.5z" fill="#000"/></g><g transform="translate(-10,341)"><path d="M8.5,1 l5,4.5 h-3.5 v3 h3.5 L8.5,13 l-5,-4.5 h3.5 v-3 h-3.5z" fill="#000"/></g><g transform="translate(6,341)"><path d="M5,3l2.5,3h-1.5v3h-2v-3h-1.5z" fill="#000"/><path d="M11,3l2.5,3h-1.5v3h-2v-3h-1.5z" fill="#000"/><rect x="2" y="10.5" width="12" height="1.2" fill="#000"/></g><g transform="translate(535,357)"><path d="M4.5,3l6,10M11,3l-6,10" fill="none" stroke="#000" stroke-width="1.2"/><path d="M2.5,2.5a1.5,1.5 0 1,0 3,1M12.5,2.5a1.5,1.5 0 1,1 -3,1" fill="none" stroke="#000" stroke-width="1"/></g><g transform="translate(551,357)"><path d="M6.5,2.5h2.5v4.5h3.5v2h-10v-2h4z" fill="none" stroke="#000" stroke-width="1.2"/><rect x="2" y="9" width="12" height="4.5" fill="#000"/></g><g transform="translate(567,357)"><path d="M2.5,8.5v-3.5h8" fill="none" stroke="#000" stroke-width="1.3"/><path d="M9,2l4.5,3l-4.5,3z" fill="#000"/><rect x="2" y="9" width="12" height="4.5" fill="#000"/></g><g transform="translate(583,357)"><path d="M2.5,8.5v-2q0,-4.5 5.5,-4.5t5.5,4.5v2" fill="none" stroke="#000" stroke-width="1.2"/><rect x="2" y="9" width="12" height="4.5" fill="#000"/></g><g transform="translate(599,357)"><path d="M1.5,7q6.5,-7 13,0M3,8.5q5,-5.5 10,0" fill="none" stroke="#000" stroke-width="1.1"/></g><g transform="translate(615,357)"><path d="M2,8 l4.5,-5 v3.5 h3 v-3.5 L14,8 l-4.5,5 v-3.5 h-3 v3.5z" fill="#000"/></g><g transform="translate(7,357)"><path d="M8.5,1l5.5,5h-3l0,2l3,1.5v2.5l-3.5,-1.5l-1,3h-2l-1,-3l-3.5,1.5v-2.5l3,-1.5v-2h-3z" fill="#000"/></g><g transform="translate(408,373)"><path d="M8,1.5l6,6h-3.5l1,5l-3.5,-2l-3.5,2l1,-5h-3.5z" fill="#000"/></g><g transform="translate(424,373)"><path d="M8,13.5l6,-6h-3.5l1,-5l-3.5,2l-3.5,-2l1,5h-3.5z" fill="#000"/></g><g transform="translate(440,373)"><path d="M1,7.5l5,-4.5v9zM7,7.5l5,-4.5v9z" fill="#000"/><rect x="19" y="3" width="2" height="9" fill="#000"/><path d="M21,7.5l5,-4.5v9z" fill="#000"/></g><g transform="translate(488,373)"><path d="M9,7.5a2,2 0 1,0 4,0a2,2 0 1,0 -4,0" fill="none" stroke="#000" stroke-width="0.9"/><rect x="10.6" y="7" width="1" height="1" fill="#000"/></g><g transform="translate(504,373)"><path d="M6,3l5,4.5l-5,4.5z" fill="#000"/></g><g transform="translate(520,373)"><path d="M4,3l5,4.5l-5,4.5z" fill="#000"/><rect x="9.5" y="3" width="2" height="9" fill="#000"/></g><g transform="translate(536,373)"><path d="M3,3l5,4.5l-5,4.5zM9,3l5,4.5l-5,4.5z" fill="#000"/></g><g transform="translate(616,373)"><rect x="2" y="2" width="12" height="5" fill="#000"/><rect x="3" y="3" width="1" height="1" fill="#fff"/><rect x="3" y="5" width="1" height="1" fill="#fff"/><rect x="5" y="3" width="1" height="1" fill="#fff"/><rect x="5" y="5" width="1" height="1" fill="#fff"/><rect x="7" y="3" width="1" height="1" fill="#fff"/><rect x="7" y="5" width="1" height="1" fill="#fff"/><rect x="9" y="3" width="1" height="1" fill="#fff"/><rect x="9" y="5" width="1" height="1" fill="#fff"/><rect x="11" y="3" width="1" height="1" fill="#fff"/><rect x="11" y="5" width="1" height="1" fill="#fff"/></g><g transform="translate(632,373)"><path d="M1,7.5l6,-5.5v3l3,-2.5l2.5,0l-1.5,3l3.5,1v2l-3.5,1l1.5,3h-2.5l-3,-2.5v3z" fill="#000"/></g><g transform="translate(-8,373)"><path d="M1,7.5l6,-5.5v3l3,-2.5l2.5,0l-1.5,3l3.5,1v2l-3.5,1l1.5,3h-2.5l-3,-2.5v3z" fill="#000"/></g><g transform="translate(8,373)"><path d="M8.5,12.5a4.5,4.5 0 1,1 3.5,-6" fill="none" stroke="#000" stroke-width="1.3"/><path d="M9,10l5,-1l-2.5,-3.5z" fill="#000"/><path d="M7,12l3,1.5" fill="none" stroke="#000" stroke-width="1.2"/></g></g>
<rect x="33" y="399" width="285" height="1" fill="#0a3a0a"/><rect x="318" y="399" width="152" height="1" fill="#a07858"/>
</svg>
<div class="t" style="left:9.5px;top:0px">P:SCPLBM</div>
<div class="t" style="left:99.5px;top:0px">N:SCPLBM</div>
<div class="t" style="left:189.5px;top:0px">T:SKORPED</div>
<div class="t" style="left:279.5px;top:0px">P:NONE</div>
<div class="t" style="left:369.5px;top:0px">H:NONE</div>
<div class="t" style="left:459.5px;top:0px">S:NONE</div>
<div class="t" style="left:387.5px;top:10px">SCPRSHOL</div>
<div class="t" style="left:509.5px;top:10px">K  R:   0    0    0</div>
<div class="t" style="left:391.5px;top:18px">SCPELBR</div>
<div class="t" style="left:509.5px;top:18px">K  R:   0    0    0</div>
<div class="t" style="left:396.5px;top:26px">SCPFARMR</div>
<div class="t" style="left:510.5px;top:26px">K  R:   0    0    0</div>
<div class="t" style="left:401.5px;top:34px">SCPRCL2</div>
<div class="t" style="left:511.5px;top:34px">K  R:   0    0  968</div>
<div class="t" style="left:401.5px;top:42px">SCPRCL1</div>
<div class="t" style="left:511.5px;top:42px">K  R:   0    0    0</div>
<div class="t" style="left:390.5px;top:50px">SCPLSHOL</div>
<div class="t" style="left:512.5px;top:50px">K  R:   0    0    0</div>
<div class="t" style="left:395.5px;top:58px">SCPELBL</div>
<div class="t" style="left:513.5px;top:58px">K  R:   0    0    0</div>
<div class="t" style="left:399.5px;top:66px">SCPFARML</div>
<div class="t" style="left:513.5px;top:66px">K  R:   0    0    0</div>
<div class="t" style="left:404.5px;top:74px">SCPLCL2</div>
<div class="t" style="left:514.5px;top:74px">K  R:   0  984    0</div>
<div class="t" style="left:405.5px;top:82px">SCPLCL1</div>
<div class="t" style="left:515.5px;top:82px">K  R:   0    0    0</div>
<div class="t" style="left:393.5px;top:90px">SCPPELV</div>
<div class="t" style="left:515.5px;top:90px">K  R:   0    0    0</div>
<div class="t" style="left:398.5px;top:98px">SCPA</div>
<div class="t" style="left:516.5px;top:98px">K  R:   0    0    0</div>
<div class="t" style="left:403.5px;top:106px">SCPB</div>
<div class="t" style="left:517.5px;top:106px">K  R:   0    0    0</div>
<div class="t" style="left:407.5px;top:114px">SCPC</div>
<div class="t" style="left:517.5px;top:114px">K  R:   0    0    0</div>
<div class="t" style="left:412.5px;top:122px">SCPD</div>
<div class="t" style="left:518.5px;top:122px">K  R:   0    0    0</div>
<div class="t" style="left:417.5px;top:130px">SCPE</div>
<div class="t" style="left:519.5px;top:130px">K  R:   0    0    0</div>
<div class="t" style="left:421.5px;top:138px">SCPF</div>
<div class="t" style="left:519.5px;top:138px">K  R:   0    0    0</div>
<div class="t" style="left:426.5px;top:146px">SCPG</div>
<div class="t" style="left:520.5px;top:146px">K  R:   0    0    0</div>
<div class="t" style="left:431.5px;top:154px">SCPH</div>
<div class="t" style="left:521.5px;top:154px">K  R:   0    0    0</div>
<div class="t" style="left:435.5px;top:162px">SCPI</div>
<div class="t" style="left:521.5px;top:162px">K  R:   0    0    0</div>
<div class="t" style="left:440.5px;top:170px">SCPJ</div>
<div class="t" style="left:522.5px;top:170px">K  R: 977    0    0</div>
<div class="t" style="left:445.5px;top:178px">SCPK</div>
<div class="t" style="left:523.5px;top:178px">K  R:   0    0    0</div>
<div class="t" style="left:449.5px;top:186px">SCPX</div>
<div class="t" style="left:523.5px;top:186px">K  R:   0    0    0</div>
<div class="t" style="left:402.5px;top:194px">SCPLFT</div>
<div class="t" style="left:524.5px;top:194px">K  R:   0    0    0</div>
<div class="t" style="left:407.5px;top:202px">SCPLFM</div>
<div class="t" style="left:525.5px;top:202px">K  R:   0    0    0</div>
<div class="t" style="left:411.5px;top:210px">SCPLFB</div>
<div class="t" style="left:525.5px;top:210px">K  R:   0    0    0</div>
<div class="t" style="left:404.5px;top:218px">SCPLMT</div>
<div class="t" style="left:526.5px;top:218px">K  R:   0    0  925</div>
<div class="t" style="left:409.5px;top:226px">SCPLMM</div>
<div class="t" style="left:527.5px;top:226px">K  R:   0    0    0</div>
<div class="t" style="left:413.5px;top:234px">SCPLMB</div>
<div class="t" style="left:527.5px;top:234px">K  R:   0    0    840</div>
<div class="t" style="left:406.5px;top:242px">SCPLBT</div>
<div class="t" style="left:528.5px;top:242px">K  R:   0  979    0</div>
<div class="t" style="left:411.5px;top:250px;color:#000">SCPLBM</div>
<div class="t" style="left:529.5px;top:250px;color:#000">K  R:   0   83    0</div>
<div class="t" style="left:42.5px;top:393px">V:   6  N:   3  F:   3  E:  12  T: 346 259 171</div>
<div class="t" style="left:409.5px;top:393px">FIX:   0, 270,   0  2ND:   0,   0,   0</div>
<div class="t" style="left:400.5px;top:277px;color:#000">MP</div>
<div class="t" style="left:416.5px;top:277px;color:#000">TX</div>
<div class="t" style="left:432.5px;top:277px;color:#000">GO</div>
<div class="t" style="left:448.5px;top:277px;color:#000">FL</div>
<div class="t" style="left:464.5px;top:277px;color:#000">OP</div>
<div class="t" style="left:480.5px;top:277px;color:#000">MK</div>
<div class="t" style="left:500.5px;top:277px;color:#000">P</div>
<div class="t" style="left:523.5px;top:280px;color:#000">2</div>
<div class="t" style="left:545.5px;top:277px;color:#000;transform:scale(0.667,.8);-webkit-text-stroke-width:.5px">DEL</div>
<div class="t" style="left:545.5px;top:283px;color:#000;transform:scale(0.667,.8);-webkit-text-stroke-width:.5px">OBJ</div>
<div class="t" style="left:577.5px;top:277px;color:#000;transform:scale(0.667,.8);-webkit-text-stroke-width:.5px">SET</div>
<div class="t" style="left:577.5px;top:283px;color:#000;transform:scale(0.667,.8);-webkit-text-stroke-width:.5px">ALL</div>
<div class="t" style="left:593.5px;top:277px;color:#000;transform:scale(0.667,.8);-webkit-text-stroke-width:.5px">SET</div>
<div class="t" style="left:593.5px;top:283px;color:#000;transform:scale(0.667,.8);-webkit-text-stroke-width:.5px">SCA</div>
<div class="t" style="left:609.5px;top:284px;color:#000;transform:scale(0.667,.8);-webkit-text-stroke-width:.5px">SET</div>
<div class="t" style="left:625.5px;top:284px;color:#000;transform:scale(0.617,.8);-webkit-text-stroke-width:.5px">CLR.</div>
<div class="t" style="left:401.5px;top:293.5px;color:#000">MP</div>
<div class="t" style="left:417.5px;top:293.5px;color:#000">TX</div>
<div class="t" style="left:433.5px;top:293.5px;color:#000">GO</div>
<div class="t" style="left:449.5px;top:293.5px;color:#000">FL</div>
<div class="t" style="left:465.5px;top:293.5px;color:#000">OP</div>
<div class="t" style="left:481.5px;top:293.5px;color:#000">MK</div>
<div class="t" style="left:515px;top:293px;color:#000;transform:scale(0.667,.8);-webkit-text-stroke-width:.5px">PSP</div>
<div class="t" style="left:562.5px;top:293px;color:#000;transform:scale(0.700,.8);-webkit-text-stroke-width:.5px">FIX</div>
<div class="t" style="left:610.5px;top:293px;color:#000">X</div>
<div class="t" style="left:626.5px;top:293px;color:#000">Y</div>
<div class="t" style="left:403.7px;top:310px;color:#000;transform:scale(0.833,.8);-webkit-text-stroke-width:.35px">LOAD</div>
<div class="t" style="left:403.7px;top:316px;color:#000;transform:scale(0.833,.8);-webkit-text-stroke-width:.35px">SHAPE</div>
<div class="t" style="left:451.7px;top:310px;color:#000;transform:scale(0.833,.8);-webkit-text-stroke-width:.35px">SAVE</div>
<div class="t" style="left:451.7px;top:316px;color:#000;transform:scale(0.833,.8);-webkit-text-stroke-width:.35px">SHAPE</div>
<div class="t" style="left:499.5px;top:309px;color:#000;transform:scale(0.667,.8);-webkit-text-stroke-width:.5px">HIER</div>
<div class="t" style="left:549.5px;top:309px;color:#000;transform:scale(0.750,.8);-webkit-text-stroke-width:.5px">PA</div>
<div class="t" style="left:404.7px;top:326px;color:#000;transform:scale(0.833,.8);-webkit-text-stroke-width:.35px">LOAD</div>
<div class="t" style="left:404.7px;top:332px;color:#000;transform:scale(0.817,.8);-webkit-text-stroke-width:.35px">PEDANTIC</div>
<div class="t" style="left:452.7px;top:326px;color:#000;transform:scale(0.833,.8);-webkit-text-stroke-width:.35px">SAVE</div>
<div class="t" style="left:452.7px;top:332px;color:#000;transform:scale(0.800,.8);-webkit-text-stroke-width:.35px">BINARY</div>
<div class="t" style="left:564px;top:325px;color:#000;transform:scale(0.750,.8);-webkit-text-stroke-width:.5px">PB</div>
<div class="t" style="left:406.7px;top:342px;color:#000;transform:scale(0.833,.8);-webkit-text-stroke-width:.35px">LOAD</div>
<div class="t" style="left:406.7px;top:348px;color:#000;transform:scale(0.833,.8);-webkit-text-stroke-width:.35px">TEXT</div>
<div class="t" style="left:440.5px;top:348px;color:#000;transform:scale(0.667,.8);-webkit-text-stroke-width:.5px">PAL</div>
<div class="t" style="left:454.7px;top:342px;color:#000;transform:scale(0.833,.8);-webkit-text-stroke-width:.35px">SAVE</div>
<div class="t" style="left:454.7px;top:348px;color:#000;transform:scale(0.833,.8);-webkit-text-stroke-width:.35px">TEXT</div>
<div class="t" style="left:488.5px;top:348px;color:#000;transform:scale(0.667,.8);-webkit-text-stroke-width:.5px">PAL</div>
<div class="t" style="left:502.7px;top:341.5px;color:#000;transform:scale(0.833,.8);-webkit-text-stroke-width:.35px">FRONT</div>
<div class="t" style="left:407.7px;top:358px;color:#000;transform:scale(0.833,.8);-webkit-text-stroke-width:.35px">LOAD</div>
<div class="t" style="left:407.7px;top:364px;color:#000;transform:scale(0.775,.8);-webkit-text-stroke-width:.35px">HIERARCHY</div>
<div class="t" style="left:455.7px;top:358px;color:#000;transform:scale(0.833,.8);-webkit-text-stroke-width:.35px">SAVE</div>
<div class="t" style="left:455.7px;top:364px;color:#000;transform:scale(0.775,.8);-webkit-text-stroke-width:.35px">HIERARCHY</div>
<div class="t" style="left:503.7px;top:357.5px;color:#000;transform:scale(0.783,.8);-webkit-text-stroke-width:.35px">RIGHT</div>
<div class="t" style="left:600.5px;top:364px;color:#000;transform:scale(0.667,.8);-webkit-text-stroke-width:.5px">DBL</div>
<div class="t" style="left:633.5px;top:358px;color:#000;transform:scale(0.750,.8);-webkit-text-stroke-width:.5px">VK</div>
<div class="t" style="left:553.5px;top:373.5px;color:#000;transform:scale(0.667,.8);-webkit-text-stroke-width:.5px">CLR</div>
<div class="t" style="left:553.5px;top:379.5px;color:#000;transform:scale(0.667,.8);-webkit-text-stroke-width:.5px">KEY</div>
<div class="t" style="left:569.5px;top:373.5px;color:#000;transform:scale(0.667,.8);-webkit-text-stroke-width:.5px">SET</div>
<div class="t" style="left:569.5px;top:379.5px;color:#000;transform:scale(0.667,.8);-webkit-text-stroke-width:.5px">KEY</div>
<div class="t" style="left:583.7px;top:373.5px;color:#000;transform:scale(0.800,.8);-webkit-text-stroke-width:.35px">CLEAR</div>
<div class="t" style="left:583.7px;top:379.5px;color:#000;transform:scale(0.767,.8);-webkit-text-stroke-width:.35px">LOOP</div>
</div></body></html>
